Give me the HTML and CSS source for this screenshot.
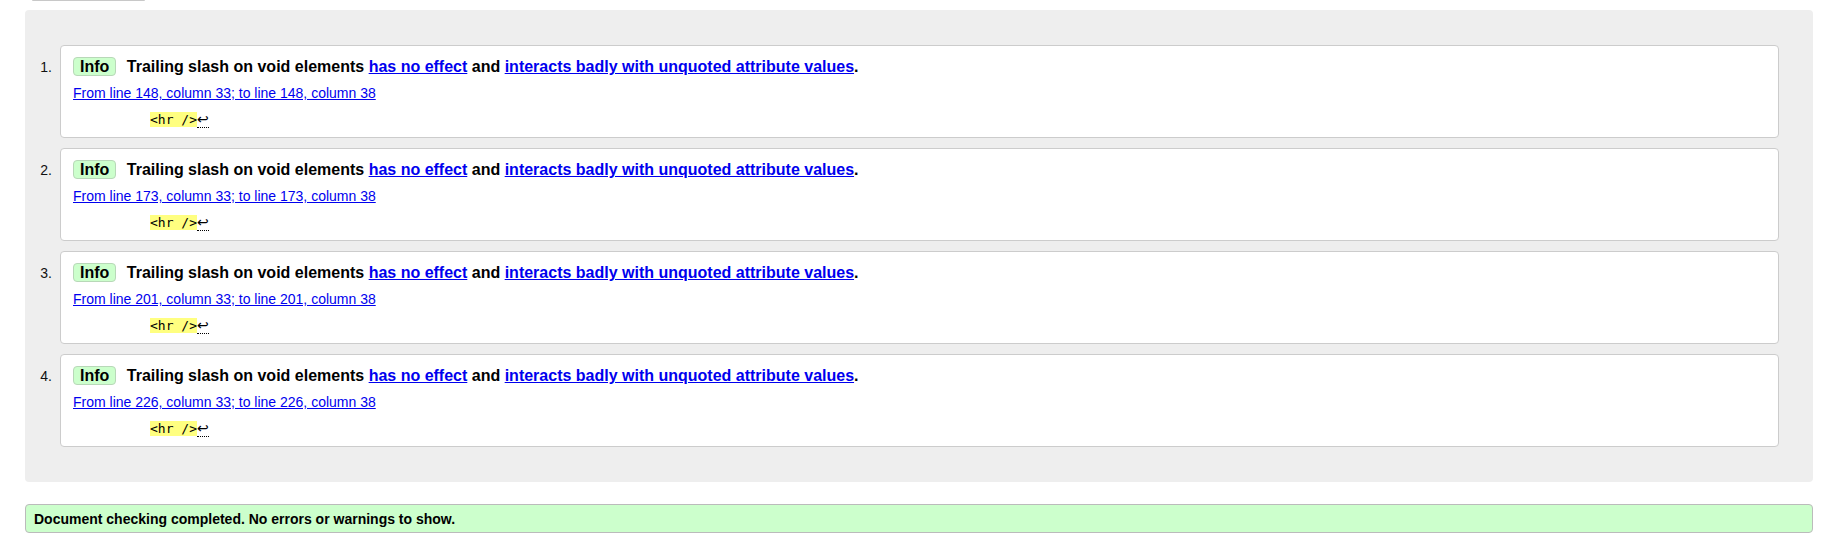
FILE: index.html
```html
<!DOCTYPE html>
<html>
<head>
<meta charset="utf-8">
<title>Nu Html Checker results</title>
<link rel="stylesheet" href="styles.css">
</head>
<body>
<div class="topstub"></div>
<div class="results">
  <ol class="messages">
    <li class="item">
      <span class="num">1.</span>
      <div class="card">
        <p class="message"><span class="badge">Info</span> Trailing slash on void elements <a href="#">has no effect</a> and <a href="#">interacts badly with unquoted attribute values</a>.</p>
        <p class="location"><a href="#">From line 148, column 33; to line 148, column 38</a></p>
        <p class="extract"><code><b class="hl">&lt;hr /&gt;</b><span class="lf" title="Line break">↩</span></code></p>
      </div>
    </li>
    <li class="item">
      <span class="num">2.</span>
      <div class="card">
        <p class="message"><span class="badge">Info</span> Trailing slash on void elements <a href="#">has no effect</a> and <a href="#">interacts badly with unquoted attribute values</a>.</p>
        <p class="location"><a href="#">From line 173, column 33; to line 173, column 38</a></p>
        <p class="extract"><code><b class="hl">&lt;hr /&gt;</b><span class="lf" title="Line break">↩</span></code></p>
      </div>
    </li>
    <li class="item">
      <span class="num">3.</span>
      <div class="card">
        <p class="message"><span class="badge">Info</span> Trailing slash on void elements <a href="#">has no effect</a> and <a href="#">interacts badly with unquoted attribute values</a>.</p>
        <p class="location"><a href="#">From line 201, column 33; to line 201, column 38</a></p>
        <p class="extract"><code><b class="hl">&lt;hr /&gt;</b><span class="lf" title="Line break">↩</span></code></p>
      </div>
    </li>
    <li class="item">
      <span class="num">4.</span>
      <div class="card">
        <p class="message"><span class="badge">Info</span> Trailing slash on void elements <a href="#">has no effect</a> and <a href="#">interacts badly with unquoted attribute values</a>.</p>
        <p class="location"><a href="#">From line 226, column 33; to line 226, column 38</a></p>
        <p class="extract"><code><b class="hl">&lt;hr /&gt;</b><span class="lf" title="Line break">↩</span></code></p>
      </div>
    </li>
  </ol>
</div>
<p class="success">Document checking completed. No errors or warnings to show.</p>
</body>
</html>
```

FILE: styles.css
```css
html, body {
  margin: 0;
  padding: 0;
  background: #fff;
}
body {
  font-family: "Liberation Sans", Arial, sans-serif;
  color: #000;
  font-size: 14px;
}
.topstub {
  margin-left: 32px;
  width: 113px;
  height: 1px;
  background: #c8c8c8;
  border-radius: 0 0 3px 3px;
}
.results {
  margin: 9px 30px 0 25px;
  background: #eee;
  border-radius: 4px;
  padding: 35px 34px 35px 0;
}
.messages {
  list-style: none;
  margin: 0;
  padding: 0;
}
.item {
  display: flex;
  align-items: flex-start;
  margin-bottom: 10px;
}
.item:last-child {
  margin-bottom: 0;
}
.num {
  width: 27px;
  flex: none;
  text-align: right;
  padding-right: 8px;
  padding-top: 14px;
  font-size: 14px;
  line-height: 16px;
  color: #111;
}
.card {
  flex: 1;
  background: #fff;
  border: 1px solid #ccc;
  border-radius: 4px;
  padding: 10px 12px 7px 12px;
}
.card p {
  margin: 0;
}
.message {
  font-size: 16px;
  font-weight: bold;
  line-height: 22px;
}
.message a {
  color: #0000ee;
}
.badge {
  display: inline-block;
  background: #ccffcc;
  border: 1px solid #b8d8b8;
  border-radius: 4px;
  padding: 0 6px;
  line-height: 17px;
  margin-right: 6px;
}
.location {
  margin-top: 6px !important;
  font-size: 14px;
  line-height: 18px;
}
.location a {
  color: #0000ee;
}
.extract {
  margin-top: 8px !important;
  padding-left: 77px;
  height: 20px;
  line-height: 20px;
  font-family: "DejaVu Sans Mono", "Liberation Mono", monospace;
  font-size: 13px;
}
.extract code {
  font-family: "DejaVu Sans Mono", "Liberation Mono", monospace;
  font-size: 13px;
  line-height: 20px;
}
.hl {
  font-weight: normal;
  background: #ffff80;
}
.lf {
  border-bottom: 1px dotted #000;
  font-family: "DejaVu Sans", sans-serif;
  font-size: 14px;
  line-height: 1;
}
.success {
  margin: 22px 30px 0 25px;
  background: #ccffcc;
  border: 1px solid #bbb;
  border-radius: 4px;
  padding: 6px 8px 5px 8px;
  font-size: 14px;
  font-weight: bold;
  line-height: 16px;
}
```
